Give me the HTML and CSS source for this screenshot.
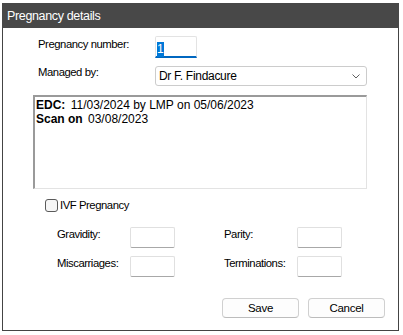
FILE: index.html
```html
<!DOCTYPE html>
<html>
<head>
<meta charset="utf-8">
<link rel="stylesheet" href="styles.css">
</head>
<body>
<div class="window">
  <div class="titlebar">Pregnancy details</div>
  <div class="panel">
    <div class="row row-number">
      <span class="lbl">Pregnancy number:</span>
      <div class="num-input"><span class="selected">1</span></div>
    </div>
    <div class="row row-managed">
      <span class="lbl">Managed by:</span>
      <div class="select">
        <span class="select-text">Dr F. Findacure</span>
        <svg class="chevron" width="8" height="5" viewBox="0 0 8 5"><path d="M0.5 0.5 L4 4 L7.5 0.5" fill="none" stroke="#606060" stroke-width="1"/></svg>
      </div>
    </div>
    <div class="memo">
      <div><b class="key">EDC:</b> 11/03/2024 by LMP on 05/06/2023</div>
      <div><b class="key">Scan on</b> 03/08/2023</div>
    </div>
    <div class="ivf">
      <span class="checkbox"></span>
      <span class="ivf-label">IVF Pregnancy</span>
    </div>
    <div class="counts">
      <div class="field"><span class="flbl">Gravidity:</span><div class="box"></div></div>
      <div class="field"><span class="flbl">Parity:</span><div class="box"></div></div>
      <div class="field"><span class="flbl">Miscarriages:</span><div class="box"></div></div>
      <div class="field"><span class="flbl">Terminations:</span><div class="box"></div></div>
    </div>
    <div class="buttons">
      <div class="btn">Save</div>
      <div class="btn">Cancel</div>
    </div>
  </div>
</div>
</body>
</html>
```

FILE: styles.css
```css
body {
  margin: 0;
  background: #ffffff;
  font-family: "Liberation Sans", Arial, sans-serif;
  color: #000;
}

.window {
  margin: 3px 0 0 2px;
  width: 397px;
}

.titlebar {
  height: 25px;
  box-sizing: border-box;
  background: #484848;
  color: #ffffff;
  font-size: 12.5px;
  letter-spacing: -0.35px;
  line-height: 25px;
  padding: 1px 0 0 5px;
}

.panel {
  height: 303px;
  box-sizing: border-box;
  border: 1px solid #444444;
  border-top: 0;
  padding-top: 8px;
}

.row {
  display: flex;
  align-items: flex-start;
  margin-left: 35px;
}

.lbl {
  width: 117px;
  font-size: 11.3px;
  letter-spacing: -0.45px;
  line-height: 13px;
}

.row-number .lbl {
  padding-top: 2px;
}

.row-managed {
  margin-top: 8px;
}

.num-input {
  width: 42px;
  height: 22px;
  box-sizing: border-box;
  border: 1px solid #e3e3e3;
  border-bottom: 2px solid #0067c0;
  border-radius: 2px 2px 0 0;
  padding: 2px 0 0 1px;
}

.selected {
  display: inline-block;
  height: 15px;
  line-height: 15px;
  font-size: 12px;
  background: #0078d7;
  color: #ffffff;
}

.select {
  width: 212px;
  height: 20px;
  box-sizing: border-box;
  border: 1px solid #cccccc;
  border-radius: 3px;
  display: flex;
  align-items: center;
  justify-content: space-between;
  padding: 0 6px 0 3px;
  font-size: 12px;
  letter-spacing: -0.3px;
}

.chevron {
  display: block;
}

.memo {
  margin: 9px 0 0 30px;
  width: 334px;
  height: 94px;
  box-sizing: border-box;
  border-top: 2px solid #9a9a9a;
  border-left: 2px solid #9a9a9a;
  border-right: 1px solid #e3e3e3;
  border-bottom: 1px solid #e3e3e3;
  padding: 1px 1px;
  font-size: 12px;
  line-height: 14px;
}

.key {
  margin-right: 2px;
}

.ivf {
  margin: 10px 0 0 42px;
  display: flex;
  align-items: center;
  gap: 2px;
  height: 13px;
}

.checkbox {
  width: 13px;
  height: 13px;
  box-sizing: border-box;
  border: 1px solid #5a5a5a;
  border-radius: 3px;
  background: #f6f6f6;
}

.ivf-label {
  font-size: 11.3px;
  letter-spacing: -0.45px;
  line-height: 13px;
}

.counts {
  margin: 15px 0 0 54px;
  display: grid;
  grid-template-columns: 167px auto;
  row-gap: 8px;
}

.field {
  display: flex;
  align-items: flex-start;
}

.flbl {
  width: 73px;
  font-size: 11.3px;
  letter-spacing: -0.45px;
  line-height: 13px;
  padding-top: 1px;
}

.box {
  width: 45px;
  height: 21px;
  box-sizing: border-box;
  border: 1px solid #e0e0e0;
  border-bottom-color: #a8a8a8;
  border-radius: 2px;
}

.buttons {
  margin: 21px 0 0 219px;
  display: flex;
  gap: 9px;
}

.btn {
  width: 77px;
  height: 20px;
  box-sizing: border-box;
  border: 1px solid #d0d0d0;
  border-bottom-color: #bcbcbc;
  border-radius: 4px;
  background: #fdfdfd;
  font-size: 11.5px;
  letter-spacing: -0.3px;
  line-height: 18px;
  text-align: center;
}
```
